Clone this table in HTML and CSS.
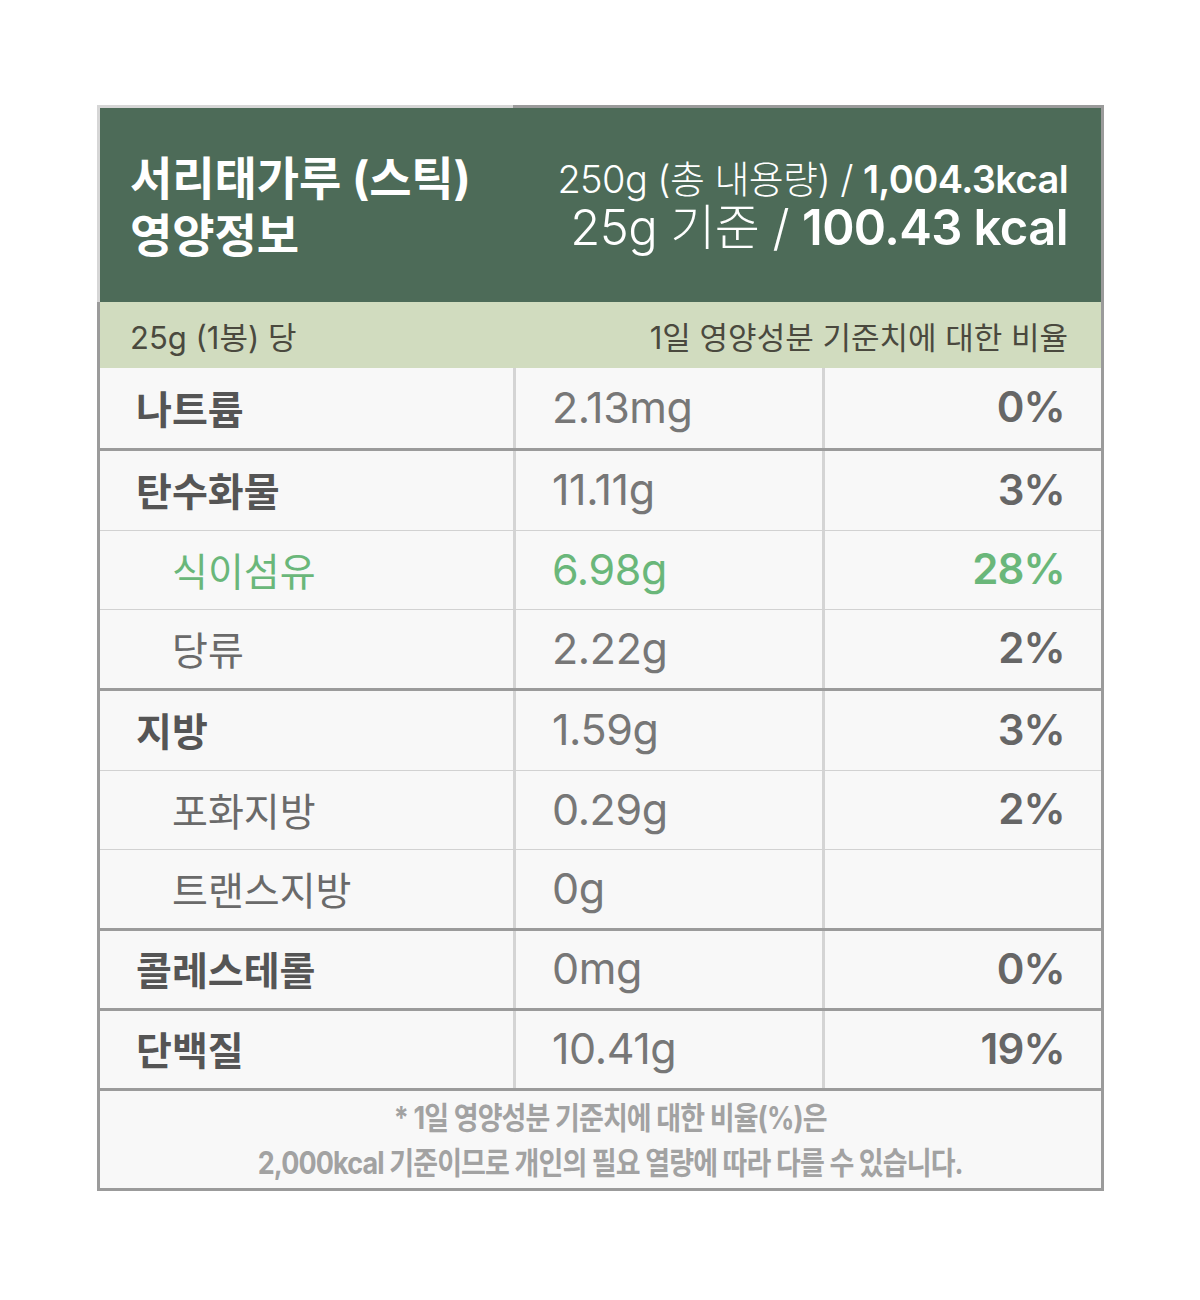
FILE: index.html
```html
<!DOCTYPE html>
<html lang="ko">
<head>
<meta charset="utf-8">
<title>서리태가루 (스틱) 영양정보</title>
<link rel="stylesheet" href="styles.css">
</head>
<body>
<div class="label">
  <div class="head">
    <div class="head-left">
      <h1 class="title">서리태가루 (스틱)<br>영양정보</h1>
    </div>
    <div class="head-right">
      <div class="kcal-total"><span class="lt">250g (총 내용량) / </span><b>1,004.3kcal</b></div>
      <div class="kcal-serv"><span class="lt">25g 기준 / </span><b>100.43 kcal</b></div>
    </div>
  </div>
  <div class="subhead sect">
    <span>25g (1봉) 당</span>
    <span>1일 영양성분 기준치에 대한 비율</span>
  </div>

  <div class="group sect">
    <div class="row r80"><div class="c name">나트륨</div><div class="c val">2.13mg</div><div class="c pct">0%</div></div>
  </div>

  <div class="group sect">
    <div class="row r79"><div class="c name">탄수화물</div><div class="c val">11.11g</div><div class="c pct">3%</div></div>
    <div class="row r79 green"><div class="c name sub">식이섬유</div><div class="c val">6.98g</div><div class="c pct">28%</div></div>
    <div class="row r79"><div class="c name sub">당류</div><div class="c val">2.22g</div><div class="c pct">2%</div></div>
  </div>

  <div class="group sect">
    <div class="row r79"><div class="c name">지방</div><div class="c val">1.59g</div><div class="c pct">3%</div></div>
    <div class="row r79"><div class="c name sub">포화지방</div><div class="c val">0.29g</div><div class="c pct">2%</div></div>
    <div class="row r79"><div class="c name sub">트랜스지방</div><div class="c val">0g</div><div class="c pct"></div></div>
  </div>

  <div class="group sect">
    <div class="row r77"><div class="c name">콜레스테롤</div><div class="c val">0mg</div><div class="c pct">0%</div></div>
  </div>

  <div class="group sect">
    <div class="row r77"><div class="c name">단백질</div><div class="c val">10.41g</div><div class="c pct">19%</div></div>
  </div>

  <div class="foot sect">
    <p class="note">* 1일 영양성분 기준치에 대한 비율(%)은<br>2,000kcal 기준이므로 개인의 필요 열량에 따라 다를 수 있습니다.</p>
  </div>
</div>
</body>
</html>
```

FILE: styles.css
```css
* { box-sizing: border-box; }

body {
  margin: 0;
  background: #ffffff;
  font-family: "Inter", "Noto Sans CJK KR", sans-serif;
}

.label {
  width: 1007px;
  margin: 105px 0 0 97px;
}

.sect {
  border-left: 3px solid #9b9b9b;
  border-right: 3px solid #9b9b9b;
}

/* header */
.head {
  display: grid;
  grid-template-columns: 416px 591px;
  height: 197px;
}
.head-left {
  background: #4d6b58;
  border-top: 3px solid #d6d6d6;
  border-left: 3px solid #d6d6d6;
  display: flex;
  align-items: center;
  padding-left: 30px;
}
.head-right {
  background: #4d6b58;
  border-top: 3px solid #9b9b9b;
  border-right: 3px solid #9b9b9b;
  display: flex;
  flex-direction: column;
  justify-content: center;
  align-items: flex-end;
  padding-right: 33px;
  color: #ffffff;
}
.title {
  margin: 0;
  color: #ffffff;
  font-size: 46px;
  font-weight: 700;
  line-height: 57px;
  letter-spacing: -0.1px;
  padding-top: 4px;
  white-space: nowrap;
}
.kcal-total {
  font-size: 38px;
  line-height: 46px;
  letter-spacing: -0.6px;
}
.kcal-serv {
  font-size: 49px;
  line-height: 52px;
  letter-spacing: -0.6px;
}
.lt { font-weight: 300; }
.head-right b { font-weight: 600; }

/* sub header */
.subhead {
  height: 66px;
  background: #d1dcbf;
  display: flex;
  align-items: center;
  justify-content: space-between;
  padding: 0 33px 0 30px;
  font-size: 31px;
  color: #4a493e;
  letter-spacing: 0;
}

/* table rows */
.group {
  border-bottom: 3px solid #9b9b9b;
  background: #f8f8f8;
}
.row {
  display: grid;
  grid-template-columns: 416px 309px 276px;
}
.row + .row { border-top: 1px solid #d2d2d2; }
.r80 { height: 80px; }
.r79 { height: 79px; }
.r77 { height: 77px; }

.c {
  display: flex;
  align-items: center;
  height: 100%;
  padding-bottom: 3px;
}
.name {
  border-right: 3px solid #d4d4d4;
  padding-left: 36px;
  font-size: 39px;
  font-weight: 700;
  color: #555555;
}
.name.sub {
  padding-left: 72px;
  font-weight: 400;
  color: #6a6a6a;
}
.val {
  border-right: 3px solid #d4d4d4;
  padding-left: 36px;
  font-size: 43px;
  font-weight: 400;
  color: #777777;
  letter-spacing: -0.4px;
}
.pct {
  justify-content: flex-end;
  padding-right: 36px;
  font-size: 42px;
  font-weight: 600;
  color: #666666;
  letter-spacing: -0.8px;
}
.green .name,
.green .val,
.green .pct { color: #6ab77a; }

/* footer */
.foot {
  height: 100px;
  border-bottom: 3px solid #9b9b9b;
  background: #f8f8f8;
  display: flex;
  align-items: center;
  justify-content: center;
  padding-left: 20px;
}
.note {
  margin: 0;
  text-align: center;
  font-size: 31px;
  line-height: 45px;
  font-weight: 700;
  color: #a2a2a2;
  letter-spacing: -1px;
  white-space: nowrap;
  transform: scaleX(0.87);
}
```
